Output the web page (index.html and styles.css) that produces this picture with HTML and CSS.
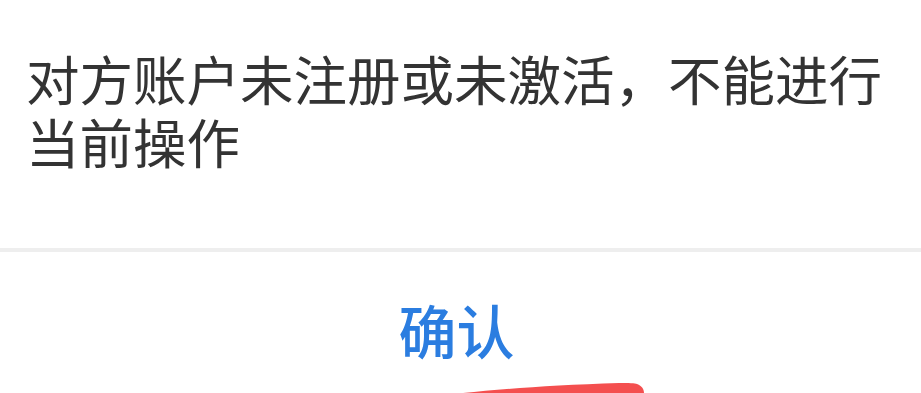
FILE: index.html
```html
<!DOCTYPE html>
<html lang="zh-CN">
<head>
    <meta charset="UTF-8">
    <meta name="viewport" content="width=device-width, initial-scale=1.0">
    <title>提示</title>
    <link rel="stylesheet" href="styles.css">
</head>
<body>
    <div class="dialog">
        <div class="message">
            <p>对方账户未注册或未激活，不能进行当前操作</p>
        </div>
        <div class="divider"></div>
        <div class="actions">
            <button class="confirm">确认</button>
        </div>
        <svg class="mark" width="182" height="12" viewBox="0 0 182 12">
            <path d="M0 12 C 40 8, 90 4, 156 2 C 166 2, 172 2, 174 3 C 179 5, 181 8, 181 12 Z" fill="#f44f4f"/>
        </svg>
    </div>
</body>
</html>
```

FILE: styles.css
```css
body {
    margin: 0;
    padding: 0;
    background-color: #ffffff;
    font-family: "Noto Sans CJK SC", "Noto Sans", sans-serif;
    overflow: hidden;
}

.dialog {
    position: relative;
    width: 921px;
    height: 393px;
    background-color: #ffffff;
}

.message {
    padding: 46px 30px 0 26px;
    height: 248px;
    box-sizing: border-box;
}

.message p {
    margin: 0;
    font-size: 53.5px;
    line-height: 63px;
    color: #333333;
}

.divider {
    height: 4px;
    background-color: #eeeeee;
}

.actions {
    display: flex;
    justify-content: center;
    padding-top: 42px;
}

.confirm {
    background: none;
    border: none;
    padding: 0;
    margin-right: 8px;
    font-family: "Noto Sans CJK SC", "Noto Sans", sans-serif;
    font-size: 58px;
    font-weight: 500;
    line-height: 70px;
    color: #2b7de0;
    cursor: pointer;
}

.mark {
    position: absolute;
    left: 463px;
    bottom: 0;
}
```
